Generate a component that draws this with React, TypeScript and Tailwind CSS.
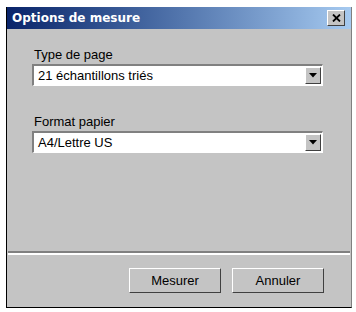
import React from "react";

const font = { fontFamily: '"Liberation Sans", Arial, sans-serif' };

function Combo({ value }: { value: string }) {
  return (
    <div className="flex h-[22px] w-[291px] border-t-2 border-l-2 border-t-[#808080] border-l-[#808080] border-b border-r border-b-white border-r-white bg-white">
      <div className="flex flex-1 items-center pl-[4px] text-[13px] text-black">{value}</div>
      <div className="m-[1px] flex w-[16px] items-center justify-center border border-t-white border-l-white border-b-[#404040] border-r-[#404040] bg-[#c4c4c4]">
        <svg width="8" height="5" viewBox="0 0 8 5">
          <path d="M0 0h8L4 4.5z" fill="#000" />
        </svg>
      </div>
    </div>
  );
}

function Btn({ label }: { label: string }) {
  return (
    <button className="flex h-[25px] w-[92px] items-center justify-center border border-t-white border-l-white border-b-[#404040] border-r-[#404040] bg-[#c4c4c4] text-[13px] text-black">
      {label}
    </button>
  );
}

export default function App() {
  return (
    <div className="h-[312px] w-[356px] bg-white pl-[6px] pt-[7px]" style={font}>
      <div className="flex h-[301px] w-[346px] flex-col border-l border-b border-black border-r border-r-[#808080] bg-[#c4c4c4]">
        {/* title bar */}
        <div className="flex h-[22px] items-center justify-between bg-gradient-to-r from-[#0a246a] to-[#a6caf0] pl-[5px] pr-[6px]">
          <span className="font-bold text-white" style={{ fontFamily: '"DejaVu Sans", Verdana, sans-serif', fontSize: 12 }}>
            Options de mesure
          </span>
          <div className="flex h-[16px] w-[18px] items-center justify-center border border-t-white border-l-white border-b-[#404040] border-r-[#404040] bg-[#c4c4c4]">
            <svg width="9" height="8" viewBox="0 0 9 8">
              <path d="M1 0.5L8 7.5M8 0.5L1 7.5" stroke="#000" strokeWidth="1.8" />
            </svg>
          </div>
        </div>

        {/* body */}
        <div className="flex flex-1 flex-col pl-[25px] pt-[18px]">
          <div className="mb-[1px] pl-[2px] text-[13px] leading-[16px] text-black">Type de page</div>
          <Combo value="21 échantillons triés" />
          <div className="mb-[1px] mt-[28px] pl-[2px] text-[13px] leading-[16px] text-black">Format papier</div>
          <Combo value="A4/Lettre US" />
        </div>

        {/* separator */}
        <div className="mx-[1px] border-t-2 border-b-2 border-t-[#808080] border-b-white" />

        {/* buttons */}
        <div className="flex justify-end gap-[11px] pr-[27px] pb-[14px] pt-[13px]">
          <Btn label="Mesurer" />
          <Btn label="Annuler" />
        </div>
      </div>
    </div>
  );
}
